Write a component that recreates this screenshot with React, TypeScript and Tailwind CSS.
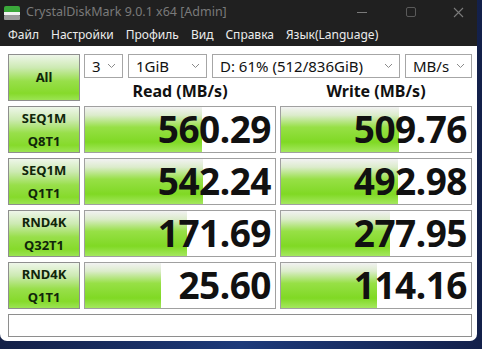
import React from 'react';

const ui = { fontFamily: '"Noto Sans", "Open Sans", sans-serif' };

type Row = { l1: string; l2: string; read: string; write: string; rw: number; ww: number };

const rows: Row[] = [
    { l1: 'SEQ1M', l2: 'Q8T1', read: '560.29', write: '509.76', rw: 117, ww: 118 },
    { l1: 'SEQ1M', l2: 'Q1T1', read: '542.24', write: '492.98', rw: 118, ww: 117 },
    { l1: 'RND4K', l2: 'Q32T1', read: '171.69', write: '277.95', rw: 102, ww: 109 },
    { l1: 'RND4K', l2: 'Q1T1', read: '25.60', write: '114.16', rw: 76, ww: 96 },
];

const btnBg = 'bg-[linear-gradient(to_bottom,#eef6e9_0%,#cdeab3_28%,#98df4a_58%,#86da2b_85%,#9be453_100%)]';
const barBg = 'bg-[linear-gradient(to_bottom,#f2f2f2_0%,#dceccc_18%,#97e046_45%,#80d924_78%,#a4e85e_100%)]';

const Chevron = () => (
    <svg width="9" height="6" viewBox="0 0 9 6" className="shrink-0">
        <path d="M1 1l3.5 3.5L8 1" fill="none" stroke="#8a8a8a" strokeWidth="1" />
    </svg>
);

const Select = ({ value, w }: { value: string; w: string }) => (
    <div className={`${w} h-[24px] border border-[#a6a6a6] bg-white flex items-center justify-between pl-[7px] pr-[6px] text-[15px] text-[#111]`}>
        <span className="leading-none">{value}</span>
        <Chevron />
    </div>
);

const Bar = ({ value, fill }: { value: string; fill: number }) => (
    <div className="h-[47px] border border-[#a0a0a0] bg-white flex">
        <div className={`h-full shrink-0 ${barBg}`} style={{ width: fill }} />
        <div className="flex-1 flex items-center justify-end pr-[4px] -ml-[120px]">
            <span className="relative text-[37px] font-bold leading-[1.15] text-[#111] tracking-[-0.5px]" style={{ fontFamily: '"Noto Sans", sans-serif' }}>
                {value}
            </span>
        </div>
    </div>
);

const LabelBtn = ({ children }: { children: React.ReactNode }) => (
    <div className={`h-[47px] border border-[#8e8e8e] ${btnBg} flex flex-col items-center justify-center text-[13px] font-bold leading-[23px] text-[#10260a]`}>
        {children}
    </div>
);

export default function App() {
    return (
        <div className="w-[482px] h-[349px] overflow-hidden bg-[linear-gradient(to_right,#142046,#1d3a7a_50%,#13204a)]" style={ui}>
            <div className="w-[477px] h-[341px] bg-white rounded-b-[7px] overflow-hidden flex flex-col">
                {/* title bar */}
                <div className="h-[24px] bg-[#202020] flex items-center">
                    <svg width="18" height="16" viewBox="0 0 18 16" className="ml-[3px] mr-[5px] mt-[2px]">
                        <rect x="1" y="1" width="16" height="7" rx="2" fill="#3aa83a" />
                        <rect x="1" y="7" width="16" height="3" fill="#f2f2f2" />
                        <rect x="1" y="10" width="16" height="5" rx="1" fill="#9a9a9a" />
                    </svg>
                    <span className="text-[12.5px] text-[#7a7a7a] mt-[1px]">CrystalDiskMark 9.0.1 x64 [Admin]</span>
                    <div className="ml-auto flex items-center h-full pr-[9px] gap-[27px]">
                        <div className="w-[20px] h-full flex items-center justify-center mr-[2px]">
                            <div className="w-[10px] h-px bg-[#7a7a7a]" />
                        </div>
                        <div className="w-[20px] h-full flex items-center justify-center">
                            <div className="w-[10px] h-[10px] border border-[#5a5a5a] rounded-[2px]" />
                        </div>
                        <div className="w-[20px] h-full flex items-center justify-center">
                            <svg width="11" height="11" viewBox="0 0 11 11">
                                <path d="M1 1l9 9M10 1l-9 9" stroke="#7a7a7a" strokeWidth="1.1" />
                            </svg>
                        </div>
                    </div>
                </div>
                {/* menu bar */}
                <div className="h-[22px] bg-[#202020] flex items-center pl-[8px] gap-[12px] text-[12px] text-[#ececec]">
                    <span>Файл</span>
                    <span>Настройки</span>
                    <span>Профиль</span>
                    <span>Вид</span>
                    <span>Справка</span>
                    <span>Язык(Language)</span>
                </div>
                {/* body */}
                <div className="pt-[8px] pl-[8px] pr-[5px] flex flex-col gap-[5px]">
                    <div className="grid grid-cols-[72px_192px_192px] gap-x-[4px] gap-y-[5px]">
                        <LabelBtn>All</LabelBtn>
                        <div className="col-span-2 flex flex-col h-[47px]">
                            <div className="flex gap-[5px]">
                                <Select value="3" w="w-[39px]" />
                                <Select value="1GiB" w="w-[79px]" />
                                <Select value="D: 61% (512/836GiB)" w="w-[188px]" />
                                <Select value="MB/s" w="w-[67px]" />
                            </div>
                            <div className="flex-1 grid grid-cols-2 gap-x-[4px] items-center text-[16px] font-bold text-[#111]">
                                <div className="text-center pt-[1px]">Read (MB/s)</div>
                                <div className="text-center pt-[1px]">Write (MB/s)</div>
                            </div>
                        </div>
                        {rows.map((r, i) => (
                            <React.Fragment key={i}>
                                <LabelBtn>
                                    <span>{r.l1}</span>
                                    <span>{r.l2}</span>
                                </LabelBtn>
                                <Bar value={r.read} fill={r.rw} />
                                <Bar value={r.write} fill={r.ww} />
                            </React.Fragment>
                        ))}
                    </div>
                    <div className="w-[464px] h-[23px] border border-[#8e8e8e] bg-white" />
                </div>
            </div>
        </div>
    );
}
